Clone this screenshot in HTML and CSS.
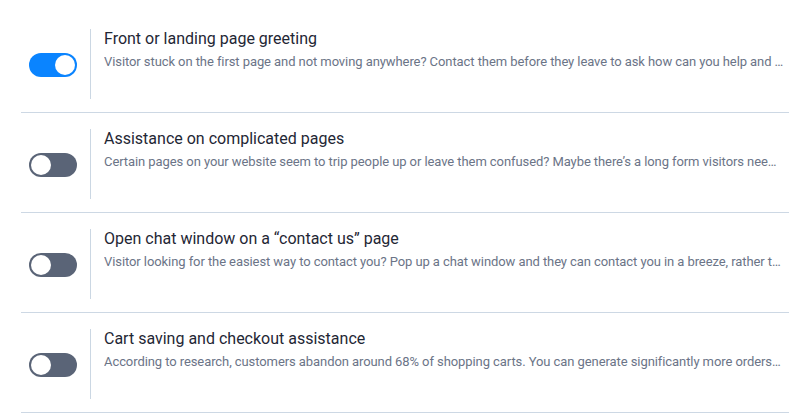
FILE: index.html
```html
<!DOCTYPE html>
<html>
<head>
<meta charset="utf-8">
<link rel="stylesheet" href="styles.css">
</head>
<body>
<div class="list">
  <div class="row">
    <div class="toggle-cell"><span class="toggle on"><span class="knob"></span></span></div>
    <div class="text">
      <div class="title">Front or landing page greeting</div>
      <div class="desc">Visitor stuck on the first page and not moving anywhere? Contact them before they leave to ask how can you help and …</div>
    </div>
  </div>
  <div class="row">
    <div class="toggle-cell"><span class="toggle"><span class="knob"></span></span></div>
    <div class="text">
      <div class="title">Assistance on complicated pages</div>
      <div class="desc">Certain pages on your website seem to trip people up or leave them confused? Maybe there’s a long form visitors nee…</div>
    </div>
  </div>
  <div class="row">
    <div class="toggle-cell"><span class="toggle"><span class="knob"></span></span></div>
    <div class="text">
      <div class="title">Open chat window on a “contact us” page</div>
      <div class="desc">Visitor looking for the easiest way to contact you? Pop up a chat window and they can contact you in a breeze, rather t…</div>
    </div>
  </div>
  <div class="row">
    <div class="toggle-cell"><span class="toggle"><span class="knob"></span></span></div>
    <div class="text">
      <div class="title">Cart saving and checkout assistance</div>
      <div class="desc">According to research, customers abandon around 68% of shopping carts. You can generate significantly more orders…</div>
    </div>
  </div>
</div>
</body>
</html>
```
FILE: styles.css
```css
html, body {
  margin: 0;
  padding: 0;
  background: #ffffff;
}
body {
  font-family: Roboto, "Liberation Sans", sans-serif;
}
.list {
  margin: 13px 10px 0 21px;
  width: 768px;
}
.row {
  display: flex;
  align-items: center;
  height: 100px;
  border-bottom: 1px solid #cdd8e4;
  box-sizing: border-box;
}
.toggle-cell {
  padding-left: 8px;
  width: 48px;
  margin-right: 13px;
  display: flex;
  align-items: center;
  margin-top: 4px;
}
.toggle {
  display: block;
  position: relative;
  width: 48px;
  height: 24px;
  border-radius: 12px;
  background: #5a6477;
  box-sizing: border-box;
}
.toggle.on {
  background: #0a84ff;
}
.knob {
  position: absolute;
  top: 2px;
  left: 2px;
  width: 20px;
  height: 20px;
  border-radius: 50%;
  background: #ffffff;
}
.toggle.on .knob {
  left: 26px;
}
.text {
  flex: 1;
  min-width: 0;
  height: 70px;
  border-left: 1px solid #cbd7e3;
  padding-left: 13px;
  padding-right: 0;
  margin-top: 2px;
  box-sizing: border-box;
}
.title {
  font-size: 16px;
  line-height: 20px;
  color: #1f2735;
  white-space: nowrap;
}
.desc {
  margin-top: 5px;
  font-size: 13px;
  line-height: 16px;
  letter-spacing: -0.08px;
  color: #6b7487;
  white-space: nowrap;
  overflow: hidden;
  text-overflow: ellipsis;
}
```
